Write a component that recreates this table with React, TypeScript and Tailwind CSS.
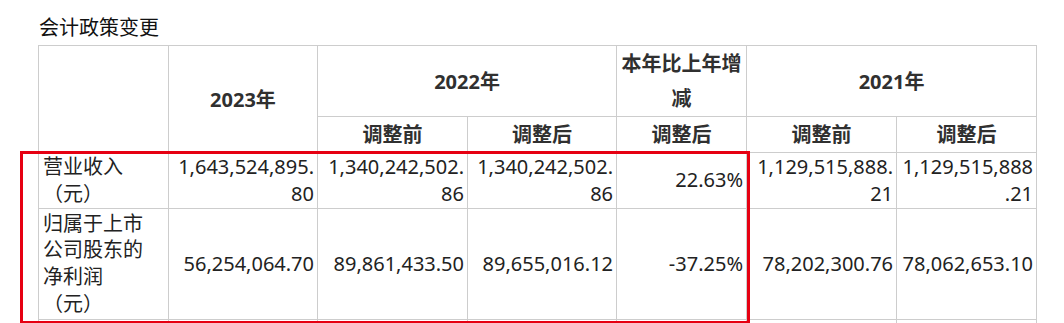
import React from 'react';

const font = { fontFamily: '"Noto Sans", "Noto Sans CJK SC", sans-serif' };

const th = 'border border-[#cdcdcd] px-[4px] text-center align-middle font-bold text-[#303030] text-[20px] leading-[35px]';
const td = 'border border-[#cdcdcd] px-[4px] pr-[3px] text-right align-middle text-[#222] text-[20px] leading-[26.7px]';
const tdLabel = 'border border-[#cdcdcd] px-[4px] text-left align-middle text-[#222] text-[20px] leading-[26.7px]';

export default function App() {
    return (
        <div className="relative w-[1064px] h-[323px] overflow-hidden bg-white" style={font}>
            <div className="pl-[39px] pt-[14px] text-[20px] leading-[27px] text-[#111]">会计政策变更</div>

            <div className="pl-[38px] pt-[4px]">
                <table className="table-fixed border-collapse w-[998px]">
                    <colgroup>
                        <col className="w-[130px]" />
                        <col className="w-[149px]" />
                        <col className="w-[150px]" />
                        <col className="w-[149px]" />
                        <col className="w-[130px]" />
                        <col className="w-[150px]" />
                        <col className="w-[140px]" />
                    </colgroup>
                    <tbody>
                        <tr className="h-[71px]">
                            <th rowSpan={2} className={th}></th>
                            <th rowSpan={2} className={th}>2023年</th>
                            <th colSpan={2} className={th}>2022年</th>
                            <th className={th}>本年比上年增减</th>
                            <th colSpan={2} className={th}>2021年</th>
                        </tr>
                        <tr className="h-[36px]">
                            <th className={th}>调整前</th>
                            <th className={th}>调整后</th>
                            <th className={th}>调整后</th>
                            <th className={th}>调整前</th>
                            <th className={th}>调整后</th>
                        </tr>
                        <tr className="h-[56px]">
                            <td className={tdLabel}>营业收入<br />（元）</td>
                            <td className={td}>1,643,524,895.<br />80</td>
                            <td className={td}>1,340,242,502.<br />86</td>
                            <td className={td}>1,340,242,502.<br />86</td>
                            <td className={td}>22.63%</td>
                            <td className={td}>1,129,515,888.<br />21</td>
                            <td className={td}>1,129,515,888<br />.21</td>
                        </tr>
                        <tr className="h-[111px]">
                            <td className={tdLabel}>归属于上市<br />公司股东的<br />净利润<br />（元）</td>
                            <td className={td}>56,254,064.70</td>
                            <td className={td}>89,861,433.50</td>
                            <td className={td}>89,655,016.12</td>
                            <td className={td}>-37.25%</td>
                            <td className={td}>78,202,300.76</td>
                            <td className={td}>78,062,653.10</td>
                        </tr>
                        <tr className="h-[56px]">
                            <td className={tdLabel}></td>
                            <td className={td}></td>
                            <td className={td}></td>
                            <td className={td}></td>
                            <td className={td}></td>
                            <td className={td}></td>
                            <td className={td}></td>
                        </tr>
                    </tbody>
                </table>
            </div>

            {/* highlight box over the two data rows */}
            <div className="absolute left-[20px] top-[151px] w-[730px] h-[173px] border-[3px] border-[#e60012] pointer-events-none" />
        </div>
    );
}
